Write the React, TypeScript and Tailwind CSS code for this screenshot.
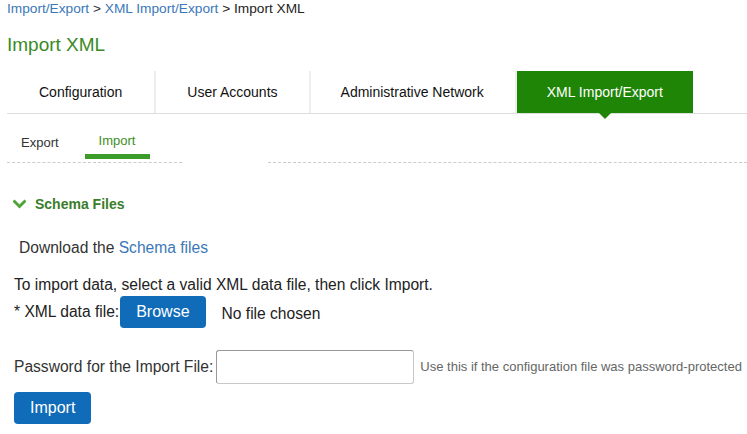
import React from 'react';

// --- Pestañas principales ---
const tabs = [
  { label: 'Configuration', active: false, pad: 'px-[32px]' },
  { label: 'User Accounts', active: false, pad: 'px-[31px]' },
  { label: 'Administrative Network', active: false, pad: 'px-[30px]' },
  { label: 'XML Import/Export', active: true, pad: 'px-[30px]' },
];

const ChevronDown: React.FC = () => (
  <svg width="13" height="10" viewBox="0 0 13 10" className="shrink-0">
    <path d="M1.5 2.5 L6.5 7.5 L11.5 2.5" fill="none" stroke="#4ea535" strokeWidth="3" strokeLinecap="square" />
  </svg>
);

const App: React.FC = () => {
  return (
    <div className="min-h-[434px] bg-white font-['Liberation_Sans',Arial,sans-serif] text-[#222]">
      {/* Breadcrumb */}
      <div className="pl-[7px] text-[13.7px] leading-[18px]">
        <a className="text-[#3b78b8]">Import/Export</a>
        <span className="text-[#333]"> &gt; </span>
        <a className="text-[#3b78b8]">XML Import/Export</a>
        <span className="text-[#222]"> &gt; Import XML</span>
      </div>

      {/* Título */}
      <h1 className="mt-[15px] pl-[7px] text-[19px] leading-[24px] text-[#3a8a26]">Import XML</h1>

      {/* Pestañas */}
      <div className="ml-[7px] mt-[14px] flex h-[43px] border-b border-[#dddddd]">
        {tabs.map((tab, i) => (
          <div
            key={tab.label}
            className={`relative flex h-[42px] items-center text-[14px] ${tab.pad} ${
              i > 0 ? 'border-l-2 border-[#eeeeee]' : ''
            } ${tab.active ? 'ml-[1px] border-l-0 bg-[#1f8506] text-white' : 'text-[#111]'}`}
          >
            {tab.label}
            {tab.active && (
              <span className="absolute left-1/2 top-full -ml-[6px] h-0 w-0 border-x-[6px] border-t-[6px] border-x-transparent border-t-[#1f8506]" />
            )}
          </div>
        ))}
      </div>

      {/* Sub-pestañas */}
      <div className="ml-[7px] mt-[19px] flex items-end">
        <div className="flex w-[175px] items-end border-b border-dashed border-[#cccccc] pb-[3px]">
          <div className="px-[14px] pb-[8px] text-[13px] leading-[16px] text-[#333]">Export</div>
          <div className="relative ml-[11px] flex flex-col items-center">
            <span className="px-[15px] text-[13px] leading-[16px] text-[#3d8f22]">Import</span>
            <span className="mt-[5px] h-[5px] w-[65px] bg-[#3c9c29]" />
          </div>
        </div>
        <div className="w-[86px]" />
        <div className="flex-1 border-b border-dashed border-[#cccccc]" />
      </div>

      {/* Schema Files */}
      <div className="mt-[33px] flex items-center gap-[9px] pl-[13px]">
        <ChevronDown />
        <span className="text-[14px] font-bold leading-[16px] text-[#3a7d2a]">Schema Files</span>
      </div>

      <div className="mt-[27px] pl-[19px] text-[15.6px] leading-[18px] text-[#333]">
        Download the <a className="text-[#3b78b8]">Schema files</a>
      </div>

      {/* Formulario */}
      <div className="mt-[19px] pl-[14px] text-[15.6px] leading-[18px] text-[#222]">
        To import data, select a valid XML data file, then click Import.
      </div>

      <div className="mt-[2px] flex items-center pl-[14px] text-[15.6px] text-[#222]">
        <span>* XML data file:</span>
        <button className="ml-[1px] h-[32px] rounded-[4px] bg-[#106cb9] px-[16px] text-[16px] text-white">Browse</button>
        <span className="ml-[16px] mt-[3px]">No file chosen</span>
      </div>

      <div className="mt-[22px] flex items-center pl-[14px]">
        <span className="text-[15.6px] text-[#333]">Password for the Import File:</span>
        <input
          type="password"
          className="ml-[3px] h-[34px] w-[198px] rounded-[3px] border border-[#c8c8c8] border-t-[#999] border-l-[#999] bg-white"
        />
        <span className="ml-[6px] text-[13px] text-[#666]">Use this if the configuration file was password-protected</span>
      </div>

      <div className="mt-[8px] pl-[14px]">
        <button className="h-[32px] rounded-[4px] bg-[#106cb9] px-[16px] text-[16px] text-white">Import</button>
      </div>
    </div>
  );
};

export default App;
